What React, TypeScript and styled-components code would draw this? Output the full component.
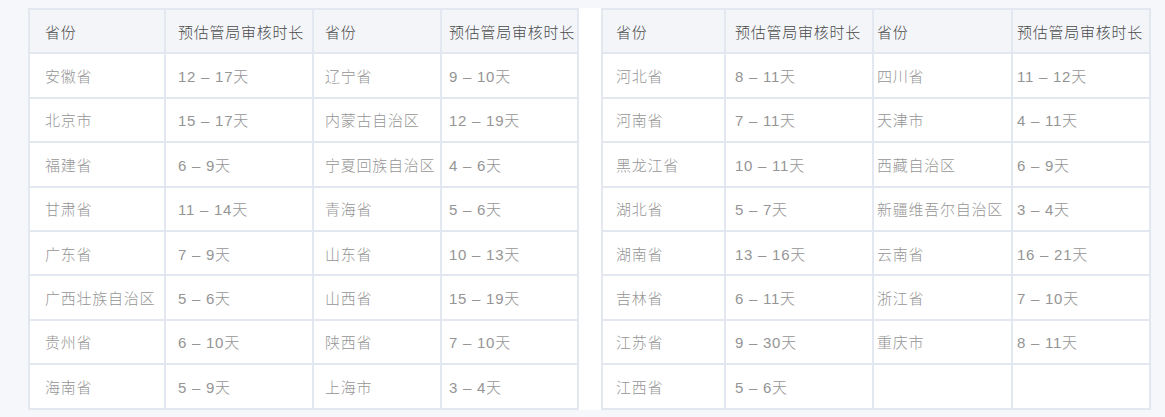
import React from 'react';
import styled, { createGlobalStyle } from 'styled-components';

const GlobalStyle = createGlobalStyle`
  html, body {
    margin: 0;
    padding: 0;
    background: #f6f7fa;
    font-family: "Liberation Sans", "Noto Sans CJK SC", sans-serif;
  }
`;

const Page = styled.div`
  width: 1165px;
  height: 417px;
  padding: 8px 16px 0 28px;
  box-sizing: border-box;
  overflow: hidden;
`;

const Panel = styled.div`
  display: flex;
  gap: 22px;
  background: #ffffff;
`;

const Table = styled.table`
  border-collapse: collapse;
  table-layout: fixed;
  border: 2px solid #e3e7f0;
  background: #ffffff;
`;

const Th = styled.th<{ $pad: number }>`
  height: 44.4px;
  padding: 0 0 0 ${p => p.$pad}px;
  border: 2px solid #e3e7f0;
  background: #f3f5f9;
  color: #4a4a4a;
  font-size: 15px;
  font-weight: 300;
  letter-spacing: 0.75px;
  text-align: left;
  white-space: nowrap;
  box-sizing: border-box;
`;

const Td = styled.td<{ $pad: number }>`
  height: 44.4px;
  padding: 0 0 0 ${p => p.$pad}px;
  border: 2px solid #e3e7f0;
  color: #959595;
  font-size: 15px;
  font-weight: 300;
  letter-spacing: 0.75px;
  white-space: nowrap;
  box-sizing: border-box;
`;

type Row = [string, string, string, string];

const leftRows: Row[] = [
  ['安徽省', '12 – 17天', '辽宁省', '9 – 10天'],
  ['北京市', '15 – 17天', '内蒙古自治区', '12 – 19天'],
  ['福建省', '6 – 9天', '宁夏回族自治区', '4 – 6天'],
  ['甘肃省', '11 – 14天', '青海省', '5 – 6天'],
  ['广东省', '7 – 9天', '山东省', '10 – 13天'],
  ['广西壮族自治区', '5 – 6天', '山西省', '15 – 19天'],
  ['贵州省', '6 – 10天', '陕西省', '7 – 10天'],
  ['海南省', '5 – 9天', '上海市', '3 – 4天'],
];

const rightRows: Row[] = [
  ['河北省', '8 – 11天', '四川省', '11 – 12天'],
  ['河南省', '7 – 11天', '天津市', '4 – 11天'],
  ['黑龙江省', '10 – 11天', '西藏自治区', '6 – 9天'],
  ['湖北省', '5 – 7天', '新疆维吾尔自治区', '3 – 4天'],
  ['湖南省', '13 – 16天', '云南省', '16 – 21天'],
  ['吉林省', '6 – 11天', '浙江省', '7 – 10天'],
  ['江苏省', '9 – 30天', '重庆市', '8 – 11天'],
  ['江西省', '5 – 6天', '', ''],
];

const headers = ['省份', '预估管局审核时长', '省份', '预估管局审核时长'];

interface IReviewTable {
  rows: Row[];
  widths: number[];
  pads: number[];
}

const ReviewTable = ({ rows, widths, pads }: IReviewTable) => (
  <Table style={{ width: widths.reduce((a, b) => a + b, 0) }}>
    <colgroup>
      {widths.map((w, i) => (
        <col key={i} style={{ width: w }} />
      ))}
    </colgroup>
    <thead>
      <tr>
        {headers.map((h, i) => (
          <Th key={i} $pad={pads[i]}>
            {h}
          </Th>
        ))}
      </tr>
    </thead>
    <tbody>
      {rows.map((r, i) => (
        <tr key={i}>
          {r.map((c, j) => (
            <Td key={j} $pad={pads[j]}>
              {c}
            </Td>
          ))}
        </tr>
      ))}
    </tbody>
  </Table>
);

export default function App() {
  return (
    <>
      <GlobalStyle />
      <Page>
        <Panel>
          <ReviewTable
            rows={leftRows}
            widths={[136, 148, 128, 137]}
            pads={[15, 12, 11, 7]}
          />
          <ReviewTable
            rows={rightRows}
            widths={[123, 148, 139, 138]}
            pads={[13, 9, 3, 4]}
          />
        </Panel>
      </Page>
    </>
  );
}
